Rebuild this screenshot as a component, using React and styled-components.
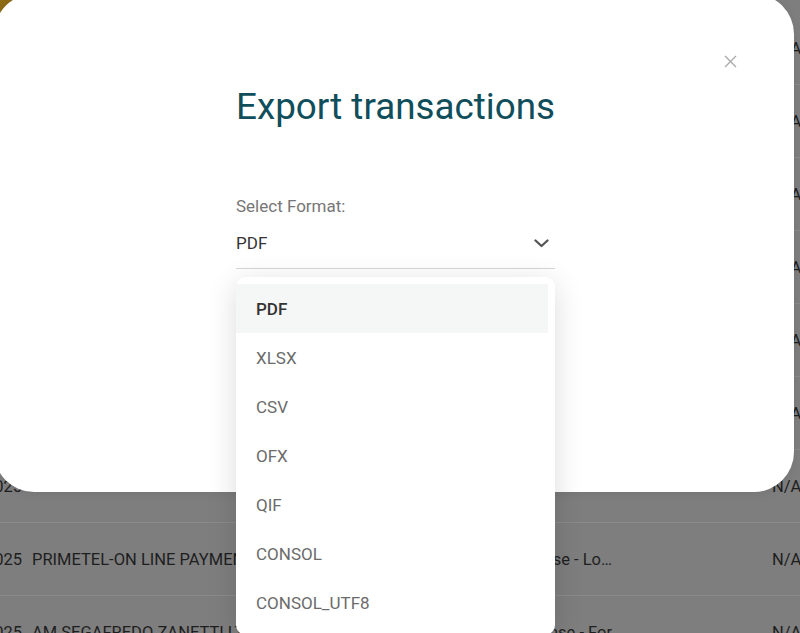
import React, { useState } from 'react';
import styled, { createGlobalStyle } from 'styled-components';

const GlobalStyle = createGlobalStyle`
	html, body {
		margin: 0;
		padding: 0;
		background: #7e7e7e;
		overflow: hidden;
	}
	body {
		font-family: Roboto, 'Liberation Sans', sans-serif;
	}
`;

const rows = [
	{ date: '28/10/2025', desc: 'CARD PAYMENT', cat: 'Business Expense - Of…' },
	{ date: '28/10/2025', desc: 'CARD PAYMENT', cat: 'Business Expense - Of…' },
	{ date: '27/10/2025', desc: 'TRANSFER', cat: 'Business Expense - Tr…' },
	{ date: '27/10/2025', desc: 'TRANSFER', cat: 'Business Expense - Tr…' },
	{ date: '26/10/2025', desc: 'CARD PAYMENT', cat: 'Business Expense - Of…' },
	{ date: '26/10/2025', desc: 'CARD PAYMENT', cat: 'Business Expense - Of…' },
	{ date: '25/10/2025', desc: 'CARD PAYMENT', cat: 'Business Expense - Of…' },
	{ date: '24/10/2025', desc: 'PRIMETEL-ON LINE PAYMENT', cat: 'Business Expense - Lo…' },
	{ date: '24/10/2025', desc: 'AM SEGAFREDO ZANETTI LTD', cat: 'Business Expense - For' },
];

const formats = ['PDF', 'XLSX', 'CSV', 'OFX', 'QIF', 'CONSOL', 'CONSOL_UTF8'];

const App = () => {
	const [format, setFormat] = useState('PDF');

	return (
		<>
			<GlobalStyle />
			<Page>
				<Brand />
				<Table>
					{rows.map((r, i) => (
						<Row key={i}>
							<DateCell>{r.date}</DateCell>
							<DescCell>{r.desc}</DescCell>
							<CatCell>{r.cat}</CatCell>
							<AmountCell>N/A</AmountCell>
						</Row>
					))}
				</Table>

				<Modal>
					<CloseButton aria-label='Close'>
						<svg width='13' height='13' viewBox='0 0 13 13'>
							<path d='M1 1 L12 12 M12 1 L1 12' stroke='#a9a9a9' strokeWidth='1.3' fill='none' />
						</svg>
					</CloseButton>
					<ModalBody>
						<Title>Export transactions</Title>
						<Field>
							<Label>Select Format:</Label>
							<SelectBox>
								<SelectValue>{format}</SelectValue>
								<svg width='15' height='9' viewBox='0 0 15 9'>
									<polyline points='1.5,1.5 7.5,7 13.5,1.5' stroke='#555' strokeWidth='2.3' fill='none' strokeLinecap='round' strokeLinejoin='round' />
								</svg>
							</SelectBox>
							<Menu>
								{formats.map((f) => (
									<Option key={f} $active={f === format} onClick={() => setFormat(f)}>
										{f}
									</Option>
								))}
							</Menu>
						</Field>
					</ModalBody>
				</Modal>
			</Page>
		</>
	);
};

export default App;

const Page = styled.div`
	position: relative;
	width: 800px;
	height: 633px;
	overflow: hidden;
	background: #7e7e7e;
`;

const Brand = styled.div`
	position: absolute;
	top: 0;
	left: 0;
	width: 60px;
	height: 40px;
	background: #8d6b17;
`;

const Table = styled.div`
	display: flex;
	flex-direction: column;
	padding-top: 12px;
`;

const Row = styled.div`
	box-sizing: border-box;
	height: 73px;
	display: grid;
	grid-template-columns: 92px 378px 212px 1fr;
	align-items: center;
	margin-left: -70px;
	border-bottom: 1px solid #8b8b8b;
	font-size: 16.5px;
	color: #1e1e1e;
	white-space: nowrap;
`;

const DateCell = styled.div`
	text-align: right;
`;

const DescCell = styled.div`
	padding-left: 10px;
	overflow: hidden;
`;

const CatCell = styled.div`
	text-align: right;
`;

const AmountCell = styled.div`
	padding-left: 160px;
`;

const Modal = styled.div`
	position: absolute;
	top: -6px;
	left: -6px;
	box-sizing: border-box;
	width: 800px;
	height: 498px;
	padding-left: 3px;
	background: #fff;
	border-radius: 40px;
	box-shadow: 0 2px 10px rgba(0, 0, 0, 0.08);
`;

const CloseButton = styled.button`
	position: absolute;
	top: 61px;
	right: 57px;
	padding: 0;
	border: none;
	background: none;
	display: flex;
	cursor: pointer;
`;

const ModalBody = styled.div`
	width: 319px;
	margin: 0 auto;
	padding-top: 91px;
	display: flex;
	flex-direction: column;
`;

const Title = styled.h1`
	margin: 0;
	font-size: 36.8px;
	font-weight: 400;
	line-height: 43px;
	color: #0f4e5a;
	text-align: center;
	white-space: nowrap;
`;

const Field = styled.div`
	position: relative;
	margin-top: 68px;
`;

const Label = styled.div`
	font-size: 17px;
	line-height: 21px;
	color: #767676;
`;

const SelectBox = styled.div`
	margin-top: 16px;
	padding-bottom: 14px;
	display: flex;
	align-items: center;
	justify-content: space-between;
	padding-right: 6px;
	border-bottom: 1.5px solid #d6d6d6;
`;

const SelectValue = styled.span`
	font-size: 17px;
	line-height: 21px;
	color: #333;
`;

const Menu = styled.div`
	position: absolute;
	top: 81px;
	left: 0;
	right: 0;
	padding: 7px 7px 8px 0;
	background: #fff;
	border-radius: 10px;
	box-shadow: 0 6px 30px rgba(0, 0, 0, 0.14);
`;

const Option = styled.div`
	height: 49px;
	display: flex;
	align-items: center;
	padding-left: 20px;
	font-size: 17px;
	font-weight: ${(p) => (p.$active ? 500 : 400)};
	color: ${(p) => (p.$active ? '#333' : '#6b6b6b')};
	background: ${(p) => (p.$active ? '#f5f6f6' : 'transparent')};
	cursor: pointer;
`;
